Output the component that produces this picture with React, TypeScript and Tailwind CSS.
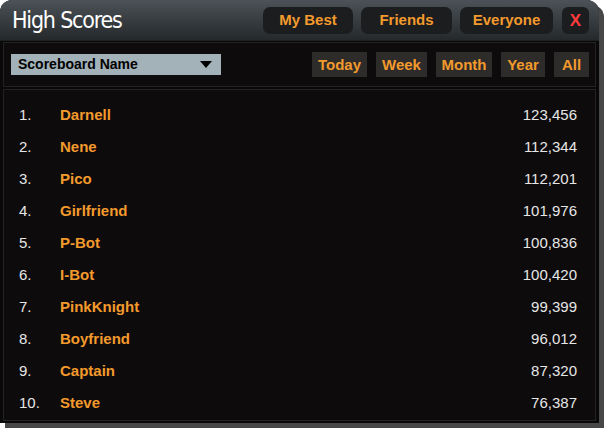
const SCORES = [
  { name: "Darnell", score: "123,456" },
  { name: "Nene", score: "112,344" },
  { name: "Pico", score: "112,201" },
  { name: "Girlfriend", score: "101,976" },
  { name: "P-Bot", score: "100,836" },
  { name: "I-Bot", score: "100,420" },
  { name: "PinkKnight", score: "99,399" },
  { name: "Boyfriend", score: "96,012" },
  { name: "Captain", score: "87,320" },
  { name: "Steve", score: "76,387" },
];

const TABS = [
  { label: "My Best", w: "w-[90px]" },
  { label: "Friends", w: "w-[91px]" },
  { label: "Everyone", w: "w-[93px]" },
];

const PERIODS = [
  { label: "Today", w: "w-[55px]" },
  { label: "Week", w: "w-[51px]" },
  { label: "Month", w: "w-[56px]" },
  { label: "Year", w: "w-[44px]" },
  { label: "All", w: "w-[35px]" },
];

export default function App() {
  return (
    <div className="w-[605px] h-[428px] bg-white font-['Liberation_Sans',Arial,sans-serif]">
      <div className="w-[599px] h-[423px] rounded-t-[12px] bg-[#0a0909] shadow-[5px_5px_0_0_#474747] flex flex-col overflow-hidden">
        {/* title bar */}
        <div className="h-[41px] shrink-0 flex items-center bg-gradient-to-b from-[#4c5257] to-[#25292c] border-b border-[#1d2023] pl-[12px] pr-[10px]">
          <h1 className="text-white text-[23px] leading-none tracking-[-1.2px] font-['DejaVu_Sans_Condensed','DejaVu_Sans',sans-serif] mt-[1px]">
            High Scores
          </h1>
          <div className="ml-auto flex items-center gap-[8px]">
            {TABS.map((t) => (
              <button
                key={t.label}
                className={`h-[27px] rounded-[7px] bg-[#1b1d1f] text-[#f39a2d] font-bold text-[15px] ${t.w}`}
              >
                {t.label}
              </button>
            ))}
            <button className="ml-[1px] h-[27px] w-[27px] rounded-[6px] bg-[#1b1d1f] text-[#ff3b3b] font-bold text-[17px] leading-none">
              X
            </button>
          </div>
        </div>

        {/* filter bar */}
        <div className="mx-[3px] mt-[1px] h-[45px] shrink-0 border border-[#242222] bg-[#0e0b0c] flex items-center pl-[7px] pr-[6px]">
          <div className="w-[210px] h-[21px] bg-[#a3b1b8] flex items-center pl-[7px] pr-[9px]">
            <span className="text-black font-bold text-[14px]">Scoreboard Name</span>
            <span className="ml-auto w-0 h-0 border-l-[6px] border-r-[6px] border-t-[7px] border-l-transparent border-r-transparent border-t-black" />
          </div>
          <div className="ml-auto flex items-center gap-[9px]">
            {PERIODS.map((p) => (
              <button
                key={p.label}
                className={`h-[25px] bg-[#2e2b2b] text-[#f39a2d] font-bold text-[15px] leading-none ${p.w}`}
              >
                {p.label}
              </button>
            ))}
          </div>
        </div>

        {/* score list */}
        <div className="mx-[3px] mt-[2px] mb-[2px] flex-1 border border-[#242222] bg-[#0e0b0c] pt-[9px] pl-[15px] pr-[18px]">
          {SCORES.map((s, i) => (
            <div key={s.name} className="h-[32px] flex items-center text-[15px]">
              <span className="w-[41px] text-[#e6e6e6]">{i + 1}.</span>
              <span className="text-[#f39a2d] font-bold">{s.name}</span>
              <span className="ml-auto text-[#e6e6e6]">{s.score}</span>
            </div>
          ))}
        </div>
      </div>
    </div>
  );
}
